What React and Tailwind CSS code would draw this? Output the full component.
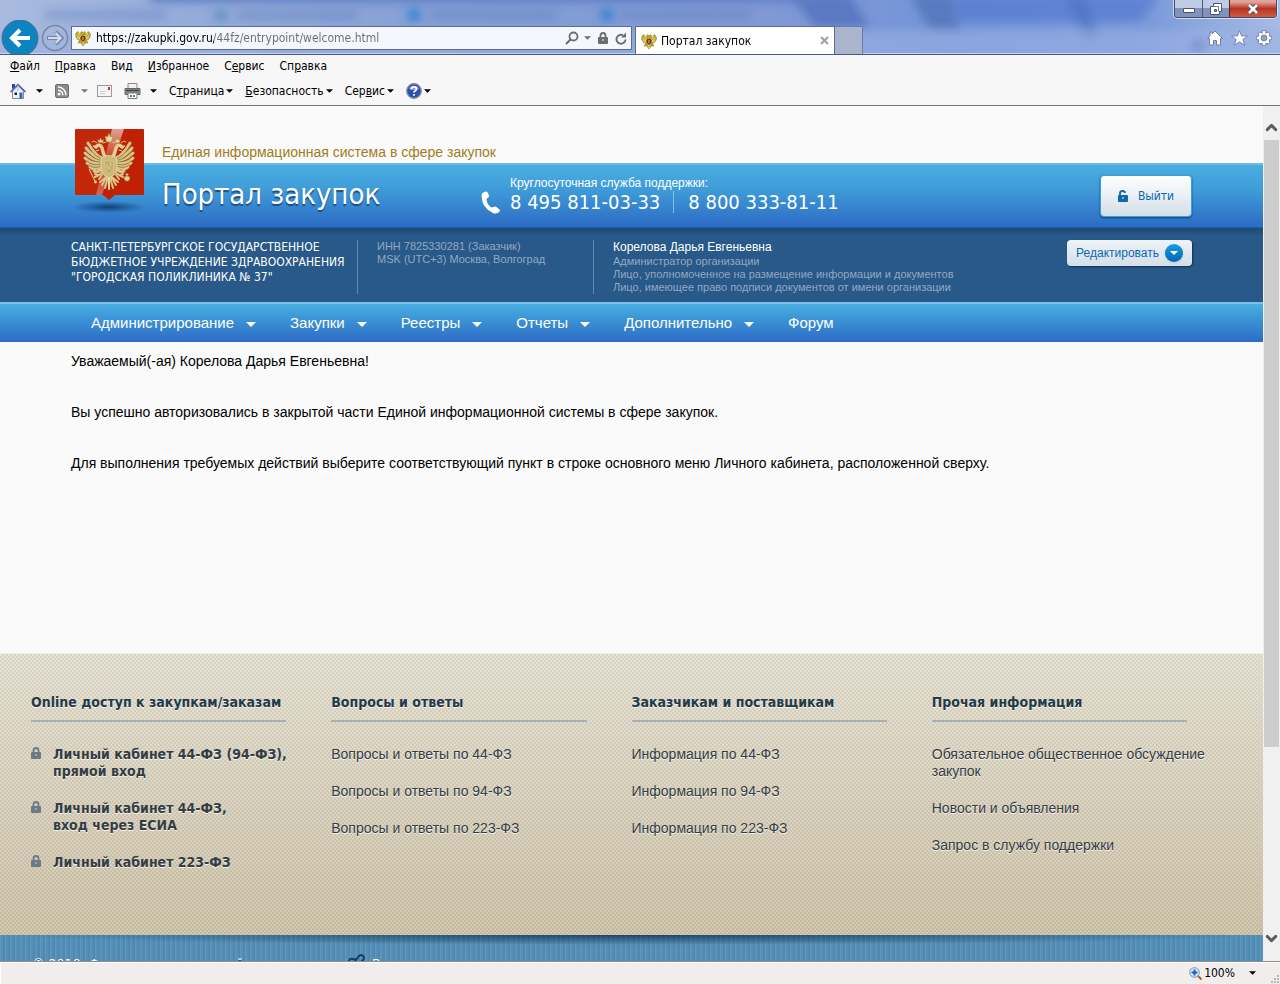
import { ChevronDown, ChevronUp } from 'lucide-react';

const navItems = [
    { label: 'Администрирование', menu: true },
    { label: 'Закупки', menu: true },
    { label: 'Реестры', menu: true },
    { label: 'Отчеты', menu: true },
    { label: 'Дополнительно', menu: true },
    { label: 'Форум', menu: false },
];

const footerColumns = [
    { title: 'Вопросы и ответы', links: ['Вопросы и ответы по 44-ФЗ', 'Вопросы и ответы по 94-ФЗ', 'Вопросы и ответы по 223-ФЗ'] },
    { title: 'Заказчикам и поставщикам', links: ['Информация по 44-ФЗ', 'Информация по 94-ФЗ', 'Информация по 223-ФЗ'] },
    { title: 'Прочая информация', links: ['Обязательное общественное обсуждение закупок', 'Новости и объявления', 'Запрос в службу поддержки'] },
];

const cabinetLinks = [
    ['Личный кабинет 44-ФЗ (94-ФЗ),', 'прямой вход'],
    ['Личный кабинет 44-ФЗ,', 'вход через ЕСИА'],
    ['Личный кабинет 223-ФЗ'],
];

function Caret({ className }) {
    return (
        <svg viewBox="0 0 10 5" className={className} fill="currentColor" aria-hidden="true">
            <path d="M0 0h10L5 5z" />
        </svg>
    );
}

// One half of the eagle, mirrored for the other side
function EagleHalf() {
    return (
        <g fill="none" strokeLinecap="round" strokeLinejoin="round">
            <path d="M34 36C28 34 24 28 20 21M33 37C27 35 22 31 18 26M33 39C26 39 21 35 17 31M33 41C27 42 21 40 17 36M33 43C28 45 22 44 19 41M34 44C29 47 25 48 22 45M35 45C32 49 29 51 26 49" stroke="#d6c68a" strokeWidth="3" />
            <path d="M33 36.500C27 34 23 29 20 24M32 38C26 37 22 33 18 29M32 40C26 40 21 37 18 34M33 42C27 44 22 42 19 39M33 44C29 46 25 46 21 43" stroke="#8d6a2c" strokeWidth="0.8" />
            <path d="M38 36C35 33 35 29 34 26C33 23 30 22 28 25" stroke="#dfd09a" strokeWidth="3.400" />
            <path d="M28 24L25 24L27 26M31 28L28 29" stroke="#e6d9a4" strokeWidth="1" />
            <path d="M30.500 20.500L29.500 17.500L31.500 18.500L32.500 16L34 18.500L35.500 17.500L35 20.500Z" fill="#e6d9a4" stroke="#a58440" strokeWidth="0.500" />
            <path d="M35 21L38 20M29 21L26 19L24 20" stroke="#d6c68a" strokeWidth="1" />
            <path d="M36 49L31 53L27 55M34 53L31 57M30 53L27 52" stroke="#d6c68a" strokeWidth="2" />
            <path d="M39 54L34 63M40 55L37 66M38 55L32 60" stroke="#d6c68a" strokeWidth="2" />
        </g>
    );
}

function Eagle() {
    return (
        <g>
            <EagleHalf />
            <g transform="translate(82 0) scale(-1 1)"><EagleHalf /></g>
            <path d="M41 54V67" stroke="#e6d9a4" strokeWidth="2" strokeLinecap="round" />
            <path d="M38 18L37 14L39.500 15L41 11L42.500 15L45 14L44 18L43 20H39Z" fill="#e6d9a4" stroke="#a58440" strokeWidth="0.500" />
            <path d="M33.500 36Q41 31 48.500 36L49 48Q47 54 41 56Q35 54 33 48Z" fill="#cdb97a" stroke="#e6d9a4" strokeWidth="0.800" />
            <path d="M36.500 39H45.500V47Q44.500 50 41 51Q37.500 50 36.500 47Z" fill="#c4ac68" stroke="#dccb92" strokeWidth="0.600" />
            <path d="M42 40L43 43L41 46L43 48M40 42L38 44L40 46L38.500 48" stroke="#e6d9a4" strokeWidth="0.800" fill="none" />
            <path d="M21 47L27 59" stroke="#e6d9a4" strokeWidth="1" />
            <circle cx="27.500" cy="60" r="1.400" fill="#e6d9a4" />
            <circle cx="59" cy="56.500" r="2.800" fill="#d6c68a" stroke="#8d6a2c" strokeWidth="0.500" />
            <path d="M59 51V54M57.500 52.500H60.500M56.500 56.500H61.500" stroke="#f0e6c0" strokeWidth="0.800" />
        </g>
    );
}

function Favicon() {
    return (
        <svg viewBox="0 0 16 16" className="size-4 shrink-0" aria-hidden="true">
            <path d="M1 3L3 1.500L4.500 4L6 4.500L5.500 2.500L7 1.500L8 3L9 1.500L10.500 2.500L10 4.500L11.500 4L13 1.500L15 3L15.500 6L14 9L11.500 10.500L13 13L10.500 13L9.500 14L8 16L6.500 14L5.500 13L3 13L4.500 10.500L2 9L0.500 6Z" fill="#b7a322" stroke="#8f7f2a" strokeWidth="0.500" />
            <path d="M1.500 5L5 8M3 3L6 7M2 7.500L5 9M14.500 5L11 8M13 3L10 7M14 7.500L11 9" stroke="#f2e68e" strokeWidth="0.900" />
            <path d="M6 6.500H10V9.500L8 11L6 9.500Z" fill="#b3141e" stroke="#4a2a12" strokeWidth="0.600" />
            <path d="M8 7V10M8 12V15" stroke="#f0e8cc" strokeWidth="0.800" />
        </svg>
    );
}

function Emblem() {
    return (
        <svg viewBox="0 0 84 90" className="absolute left-[-3px] top-[17px] h-[90px] w-[84px]" role="img" aria-label="Герб России">
            <defs>
                <radialGradient id="drop">
                    <stop offset="0" stopColor="#0d3566" stopOpacity="0.85" />
                    <stop offset="0.5" stopColor="#0d3566" stopOpacity="0.4" />
                    <stop offset="1" stopColor="#0d3566" stopOpacity="0" />
                </radialGradient>
                <linearGradient id="shine" x1="0" y1="1" x2="0" y2="0">
                    <stop offset="0" stopColor="#fff" stopOpacity="0.3" />
                    <stop offset="0.5" stopColor="#fff" stopOpacity="0.08" />
                    <stop offset="1" stopColor="#fff" stopOpacity="0.55" />
                </linearGradient>
            </defs>
            <ellipse cx="41" cy="84" rx="37" ry="6" fill="url(#drop)" />
            <path d="M8 6H75Q76 6 76 7V71Q76 72 75 72H47L41 77L35 72H8Q7 72 7 71V7Q7 6 8 6Z" fill="#c02003" />
            <path d="M56 6L34 72H8Q7 72 7 71V7Q7 6 8 6Z" fill="#fff" fillOpacity="0.03" />
            <path d="M44 6H56L34 72H28Z" fill="url(#shine)" />
            <g transform="translate(0 -1)"><Eagle /></g>
        </svg>
    );
}

function Lock({ open, className }) {
    return (
        <svg viewBox="0 0 10 12" className={className} aria-hidden="true">
            <path d={open ? 'M2 6V3Q2 1 4.500 1Q7 1 7 3' : 'M2.500 6V3.500Q2.500 1 5 1Q7.500 1 7.500 3.500V6'} fill="none" stroke="currentColor" strokeWidth="1.800" />
            <path d="M1 5H9Q10 5 10 6V11Q10 12 9 12H1Q0 12 0 11V6Q0 5 1 5ZM4 7.500V8.500H6V7.500Z" fill="currentColor" fillRule="evenodd" />
        </svg>
    );
}

function GlassBackdrop() {
    return (
        <svg className="absolute inset-0 size-full" viewBox="0 0 1280 54" preserveAspectRatio="none" aria-hidden="true">
            <defs>
                <linearGradient id="glass" x1="0" y1="0" x2="1" y2="0">
                    <stop offset="0" stopColor="#a9bbdf" />
                    <stop offset="0.12" stopColor="#98addb" />
                    <stop offset="0.35" stopColor="#849fd6" />
                    <stop offset="0.6" stopColor="#8099d6" />
                    <stop offset="0.75" stopColor="#7294d9" />
                    <stop offset="0.9" stopColor="#7c9bdb" />
                    <stop offset="1" stopColor="#a9bce3" />
                </linearGradient>
                <filter id="soft" x="-20%" y="-60%" width="140%" height="220%"><feGaussianBlur stdDeviation="5" /></filter>
                <filter id="softer" x="-20%" y="-60%" width="140%" height="220%"><feGaussianBlur stdDeviation="4" /></filter>
            </defs>
            <rect width="1280" height="54" fill="url(#glass)" />
            <g filter="url(#soft)">
                <rect x="150" y="-10" width="650" height="12" fill="#5d7fc4" />
                <path d="M790 -5H850L870 28H815Z" fill="#5272bd" opacity="0.8" />
                <path d="M910 -5H950L960 30H930Z" fill="#5173b8" opacity="0.8" />
                <path d="M950 -5H1160L1140 22H960Z" fill="#587dd0" opacity="0.8" />
                <path d="M1065 -5H1085L1100 40H1085Z" fill="#4d71be" opacity="0.6" />
                <rect x="-10" y="30" width="1320" height="30" fill="#9bb0e2" opacity="0.6" />
            </g>
            <g filter="url(#softer)" fill="#5a79b8" opacity="0.4">
                <rect x="45" y="11" width="120" height="8" />
                <rect x="236" y="11" width="120" height="8" />
                <rect x="430" y="11" width="125" height="8" />
                <rect x="620" y="11" width="130" height="8" />
                <circle cx="1198" cy="46" r="7" />
            </g>
            <g filter="url(#softer)">
                <circle cx="414" cy="15" r="7" fill="#3d84cf" />
                <circle cx="607" cy="15" r="7" fill="#3d84cf" />
                <rect x="214" y="9" width="14" height="12" fill="#6a94ca" />
            </g>
        </svg>
    );
}

function TitleBar() {
    return (
        <header className="relative h-[55px] shrink-0 overflow-hidden border-b border-[#46597f]">
            <GlassBackdrop />
            <div className="relative flex h-[54px] flex-col border-b border-[#c6d3f0]">
                <div className="flex h-5 shrink-0 justify-end pr-[3px]">
                    <div className="flex h-[18px] overflow-hidden rounded-b border border-t-0 border-[#3f4c6b] shadow-[0_0_0_1px_#ffffff99]">
                        <button aria-label="Свернуть" className="flex w-7 items-center justify-center border-r border-[#4c5978] bg-linear-to-b from-[#c0cce4] from-45% to-[#8193bd] to-50%">
                            <svg viewBox="0 0 12 5" className="mt-1 h-[5px] w-3"><path d="M0.500 0.500H11.500V4.500H0.500Z" fill="#fff" stroke="#4a5674" /></svg>
                        </button>
                        <button aria-label="Развернуть" className="flex w-[27px] items-center justify-center border-r border-[#5a2320] bg-linear-to-b from-[#c0cce4] from-45% to-[#8193bd] to-50%">
                            <svg viewBox="0 0 12 12" className="size-3"><path d="M3.500 0.500H11.500V8.500H9.500V11.500H0.500V3.500H3.500ZM4.500 6.500H6.500V8.500H4.500Z" fill="#fff" stroke="#4a5674" fillRule="evenodd" /><path d="M3.500 3.500H8.500V8.500" fill="none" stroke="#4a5674" strokeWidth="0.8" /></svg>
                        </button>
                        <button aria-label="Закрыть" className="flex w-[46px] items-center justify-center bg-linear-to-b from-[#e0a49c] from-10% via-[#b93324] via-50% to-[#cf5a40]">
                            <svg viewBox="0 0 12 10" className="h-[10px] w-3"><path d="M2 1L10 9M10 1L2 9" stroke="#5a4a5c" strokeWidth="4.600" /><path d="M2 1L10 9M10 1L2 9" stroke="#fff" strokeWidth="2.600" /></svg>
                        </button>
                    </div>
                </div>
                <div className="flex min-h-0 flex-1 items-start">
                    <button aria-label="Назад" className="size-10 shrink-0">
                        <svg viewBox="0 0 40 40" className="size-10">
                            <circle cx="20" cy="18" r="18" fill="#0c84c2" stroke="#55668a" />
                            <path d="M30 18H13M20 10L12 18L20 26" fill="none" stroke="#fff" strokeWidth="4" />
                        </svg>
                    </button>
                    <button aria-label="Вперед" className="mt-1 mr-[2px] ml-px size-7 shrink-0">
                        <svg viewBox="0 0 28 28" className="size-7">
                            <circle cx="14" cy="14" r="12.500" fill="#a6b7dc" fillOpacity="0.5" stroke="#76879f" strokeWidth="1.500" />
                            <path d="M6 14H20M14.500 8L20.500 14L14.500 20" fill="none" stroke="#7686a8" strokeWidth="4" />
                            <path d="M7 14H19M14.500 9L19.500 14L14.500 19" fill="none" stroke="#d4dcee" strokeWidth="2.200" />
                        </svg>
                    </button>
                    <div className="mt-[6px] flex h-6 w-[561px] items-center border border-[#5b6c92] bg-[#f4f7fd] pr-1 pl-[3px] text-[#6d6d6d]">
                        <Favicon />
                        <input
                            aria-label="Адрес"
                            defaultValue="https://zakupki.gov.ru/44fz/entrypoint/welcome.html"
                            className="ml-[5px] min-w-0 flex-1 bg-linear-to-r from-black from-[118px] to-[#6d6d6d] to-[118px] bg-clip-text text-xs text-transparent outline-none"
                        />
                        <button aria-label="Поиск">
                            <svg viewBox="0 0 14 14" className="size-[14px]"><circle cx="8.500" cy="5.500" r="4" fill="none" stroke="currentColor" strokeWidth="1.800" /><path d="M5.500 8.500L1 13" stroke="currentColor" strokeWidth="2.200" /></svg>
                        </button>
                        <Caret className="ml-[5px] h-1 w-[7px]" />
                        <Lock className="mx-[7px] h-3 w-[10px]" />
                        <button aria-label="Обновить">
                            <svg viewBox="0 0 12 13" className="h-[13px] w-3"><path d="M10.500 7.500A4.500 4.500 0 1 1 8 3.200" fill="none" stroke="currentColor" strokeWidth="1.900" /><path d="M6 5.500H11V0.500Z" fill="currentColor" /></svg>
                        </button>
                    </div>
                    <div className="mt-[6px] ml-[3px] flex h-7 w-[200px] items-center border border-b-0 border-[#5b6c92] bg-white px-[5px]">
                        <Favicon />
                        <span className="ml-1 text-xs">Портал закупок</span>
                        <button aria-label="Закрыть вкладку" className="ml-auto">
                            <svg viewBox="0 0 9 9" className="size-[9px]"><path d="M1 1L8 8M8 1L1 8" stroke="#a0a0a0" strokeWidth="2" /></svg>
                        </button>
                    </div>
                    <button aria-label="Новая вкладка" className="mt-[6px] h-7 w-7 border border-b-0 border-l-0 border-[#6a7ca6] bg-[#a9b4cd]" />
                    <div className="mt-[10px] mr-2 ml-auto flex gap-2">
                        <button aria-label="Домой">
                            <svg viewBox="0 0 16 16" className="size-4"><path d="M8 1L15.500 8.500H13.500V15H9.500V10.500H6.500V15H2.500V8.500H0.500L3 6V2H5V4Z" fill="#fff" stroke="#67779e" strokeWidth="0.9" /></svg>
                        </button>
                        <button aria-label="Избранное">
                            <svg viewBox="0 0 17 16" className="h-4 w-[17px]"><path d="M8.500 0.500L10.500 6H16.500L11.800 9.500L13.600 15.300L8.500 11.800L3.400 15.300L5.200 9.500L0.500 6H6.500Z" fill="#fff" stroke="#67779e" strokeWidth="0.8" /></svg>
                        </button>
                        <button aria-label="Сервис">
                            <svg viewBox="0 0 16 16" className="size-4">
                                <path d="M8 0.500V15.500M0.500 8H15.500M2.700 2.700L13.300 13.300M13.300 2.700L2.700 13.300" stroke="#67779e" strokeWidth="4" />
                                <circle cx="8" cy="8" r="4.800" fill="none" stroke="#67779e" strokeWidth="3.600" />
                                <path d="M8 1V4M8 12V15M1 8H4M12 8H15M3.100 3.100L5 5M11 11L12.900 12.900M12.900 3.100L11 5M5 11L3.100 12.900" stroke="#fff" strokeWidth="2.400" />
                                <circle cx="8" cy="8" r="4.400" fill="#8fa5d0" stroke="#fff" strokeWidth="2.400" />
                                <circle cx="8" cy="8" r="2.800" fill="none" stroke="#67779e" strokeWidth="0.8" />
                            </svg>
                        </button>
                    </div>
                </div>
            </div>
        </header>
    );
}

function Toolbars() {
    return (
        <div className="h-[51px] shrink-0 border-b border-[#767676] bg-[#f7f7f7] text-xs">
            <div className="flex h-[22px] items-center gap-[15px] px-[10px]">
                <button><u>Ф</u>айл</button>
                <button><u>П</u>равка</button>
                <button>Ви<u>д</u></button>
                <button><u>И</u>збранное</button>
                <button>С<u>е</u>рвис</button>
                <button>Сп<u>р</u>авка</button>
            </div>
            <div className="flex h-7 items-center px-[10px]">
                <button className="flex items-center gap-[10px]" aria-label="Домашняя страница">
                    <svg viewBox="0 0 16 16" className="size-4"><path d="M2 1H5V4L2 6Z" fill="#2b3fc0" /><path d="M2.500 8L8 2.500L13.500 8V15.500H2.500Z" fill="#eef2fa" stroke="#7b8ab0" /><path d="M0.500 9L8 1.500L15.500 9" fill="none" stroke="#4a5ca0" strokeWidth="1.500" /><path d="M8 2V8" stroke="#9db0dd" strokeWidth="1" /><path d="M9.500 9.500H12.500V15.500H9.500Z" fill="#3d5fb0" /><path d="M4.500 9.500H7V12H4.500Z" fill="#222" /></svg>
                    <Caret className="h-1 w-[7px]" />
                </button>
                <button className="ml-3 flex items-center gap-3" aria-label="Веб-каналы">
                    <svg viewBox="0 0 14 14" className="size-[14px]"><rect x="0.500" y="0.500" width="13" height="13" rx="1.500" fill="#8a8a8a" stroke="#6f6f6f" /><circle cx="4" cy="10.200" r="1.400" fill="#fff" /><path d="M3 6.200A4.800 4.800 0 0 1 7.800 11.200M3 3A8 8 0 0 1 11 11.200" fill="none" stroke="#fff" strokeWidth="1.500" /></svg>
                    <Caret className="h-1 w-[7px] text-[#777]" />
                </button>
                <button className="ml-[9px]" aria-label="Почта">
                    <svg viewBox="0 0 15 12" className="h-3 w-[15px]"><rect x="0.500" y="0.500" width="14" height="11" fill="#f4f4f4" stroke="#9a9a9a" /><rect x="11" y="2" width="2" height="3" fill="#e02a2a" /><path d="M3 6.500H9M3 8.500H8" stroke="#d2d2d2" /></svg>
                </button>
                <button className="ml-3 flex items-center gap-[9px]" aria-label="Печать">
                    <svg viewBox="0 0 17 16" className="h-4 w-[17px]"><path d="M4 0.500H13V6H4Z" fill="#f2f2f2" stroke="#8a8a8a" /><path d="M1 5.500H16V11.500H1Z" fill="#8b8b8b" stroke="#666" /><path d="M2 7.500H15" stroke="#444" strokeWidth="1.500" /><path d="M4 10H13V15.500H4Z" fill="#fff" stroke="#7a7a7a" /><path d="M6 12H8V14H6Z" fill="#2c7fd0" /><path d="M9 12H11V14H9Z" fill="#3aa655" /></svg>
                    <Caret className="h-1 w-[7px]" />
                </button>
                <button className="ml-3 flex items-center gap-[2px]"><span>С<u>т</u>раница</span><Caret className="h-1 w-[7px]" /></button>
                <button className="ml-3 flex items-center gap-[2px]"><span><u>Б</u>езопасность</span><Caret className="h-1 w-[7px]" /></button>
                <button className="ml-3 flex items-center gap-[2px]"><span>Сер<u>в</u>ис</span><Caret className="h-1 w-[7px]" /></button>
                <button className="ml-3 flex items-center gap-[2px]" aria-label="Справка">
                    <svg viewBox="0 0 16 16" className="size-4"><circle cx="8" cy="8" r="7.200" fill="#2a50b4" stroke="#7d8497" strokeWidth="1.400" /><path d="M3 6A5.500 5.500 0 0 1 13 6Q8 8 3 6Z" fill="#7f9be0" /><path d="M5.500 6.200Q5.500 3.800 8 3.800Q10.500 3.800 10.500 6Q10.500 7.200 9 8Q8 8.500 8 9.600M8 11V12.800" fill="none" stroke="#fff" strokeWidth="1.800" /></svg>
                    <Caret className="h-1 w-[7px]" />
                </button>
            </div>
        </div>
    );
}

function PortalHeader() {
    return (
        <div className="shrink-0">
            <div className="relative mx-[71px]">
                <Emblem />
                <p className="flex h-[57px] items-end pb-px pl-[91px] font-['Liberation_Sans',sans-serif] text-sm text-[#a07d1c]">Единая информационная система в сфере закупок</p>
            </div>
            <div className="h-[65px] border-t-2 border-b border-t-[#6cb9ec] border-b-[#0c62b4] bg-linear-to-b from-[#49aee2] via-[#3f9bd8] via-40% to-[#2d6bc4] px-[71px] text-white">
                <div className="flex h-full items-center">
                    <h1 className="w-[410px] pb-[2px] pl-[91px] text-[29px] whitespace-nowrap [text-shadow:0_2px_1px_#1d4c86]">Портал закупок</h1>
                    <svg viewBox="0 0 20 23" className="mt-3 h-[23px] w-5 shrink-0" aria-hidden="true"><path d="M5 0.500Q6.500 0.500 7 2L8 5Q8 6.500 6.500 7L5.500 8Q5.500 13 10.500 16.500L12.500 16Q14 15 15.500 16L18.500 18.500Q19.500 19.500 18.500 20.500Q16 23.500 12 22Q1 17 0.500 5Q0.500 1 5 0.500Z" fill="#fff" /></svg>
                    <div className="ml-[9px] pb-1">
                        <p className="font-['Liberation_Sans',sans-serif] text-xs leading-4">Круглосуточная служба поддержки:</p>
                        <p className="flex items-center text-xl leading-[22px] whitespace-nowrap">
                            <span className="mr-[14px] border-r border-[#7fc0ec] pr-[13px]">8 495 811-03-33</span>
                            <span>8 800 333-81-11</span>
                        </p>
                    </div>
                    <button className="ml-auto flex h-[42px] w-[92px] items-center justify-center gap-[10px] rounded border border-[#3aa0d8] bg-linear-to-b from-white to-[#d3dfe8] text-xs text-[#0b68ac] shadow-[0_1px_2px_#12407a]">
                        <Lock open className="h-3 w-[10px]" />
                        Выйти
                    </button>
                </div>
            </div>
            <div className="flex h-[74px] items-start bg-[#285988] bg-linear-to-b from-[#1f4871] to-[#285988] to-10% px-[71px] pt-3 font-['Liberation_Sans',sans-serif] text-[11px] leading-[13px] text-[#92a8c2]">
                <p className="h-[54px] w-[287px] border-r border-[#6487ad] font-['DejaVu_Sans_Condensed',sans-serif] text-xs leading-[15px] whitespace-nowrap text-white">
                    САНКТ-ПЕТЕРБУРГСКОЕ ГОСУДАРСТВЕННОЕ<br />БЮДЖЕТНОЕ УЧРЕЖДЕНИЕ ЗДРАВООХРАНЕНИЯ<br />"ГОРОДСКАЯ ПОЛИКЛИНИКА № 37"
                </p>
                <p className="h-[54px] w-[236px] border-r border-[#6487ad] pl-[19px]">
                    ИНН 7825330281 (Заказчик)<br />MSK (UTC+3) Москва, Волгоград
                </p>
                <div className="pl-[19px] whitespace-nowrap">
                    <p className="text-xs leading-[15px] text-white">Корелова Дарья Евгеньевна</p>
                    <p>Администратор организации<br />Лицо, уполномоченное на размещение информации и документов<br />Лицо, имеющее право подписи документов от имени организации</p>
                </div>
                <button className="ml-auto flex h-[26px] items-center gap-[6px] rounded bg-linear-to-b from-[#f0f2f8] to-[#d3dfe9] px-[9px] text-xs whitespace-nowrap text-[#0b6ab4] shadow-[1px_1px_2px_#12304e]">
                    Редактировать
                    <span className="flex size-[18px] items-center justify-center rounded-full bg-linear-to-b from-[#16a0e0] to-[#0663b6] text-white shadow-sm"><Caret className="h-1 w-2" /></span>
                </button>
            </div>
            <nav className="flex h-10 items-center gap-[34px] border-t-2 border-[#7dc0f0] bg-linear-to-b from-[#49aee2] to-[#2d6bc4] px-[91px] font-['Liberation_Sans',sans-serif] text-[15px] text-white">
                {navItems.map((item) => (
                    <a key={item.label} href="#" className="flex items-center gap-3">
                        {item.label}
                        {item.menu && <Caret className="mt-[2px] h-[5px] w-[10px]" />}
                    </a>
                ))}
            </nav>
        </div>
    );
}

function FooterTitle({ children }) {
    return <h2 className="mr-[45px] mb-6 border-b-2 border-[#a9afb0] pb-[9px] font-['DejaVu_Sans_Condensed',sans-serif] font-bold whitespace-nowrap text-[#24394a]">{children}</h2>;
}

function PortalFooter() {
    return (
        <footer className="flex flex-1 shrink-0 flex-col">
            <div className="bg-linear-to-b from-[#e3dfd1] to-[#cbc0a6] shadow-[0_-1px_1px_#eeeeea]">
                <div className="grid h-[281px] grid-cols-4 bg-[repeating-conic-gradient(#8c825f20_0_25%,#ffffff20_0_50%)] bg-size-[4px_4px] px-[31px] pt-10 font-['Liberation_Sans',sans-serif] text-sm leading-[17px] text-[#343c44] [text-shadow:0_1px_0_#f4f1e8]">
                    <section>
                        <FooterTitle>Online доступ к закупкам/заказам</FooterTitle>
                        <ul className="flex flex-col gap-5 font-['DejaVu_Sans_Condensed',sans-serif]">
                            {cabinetLinks.map((lines) => (
                                <li key={lines[0]} className="flex gap-3">
                                    <Lock className="mt-px h-3 w-[10px] shrink-0 text-[#6b7a86]" />
                                    <a href="#" className="font-bold whitespace-nowrap">
                                        {lines.map((line) => <span key={line} className="block">{line}</span>)}
                                    </a>
                                </li>
                            ))}
                        </ul>
                    </section>
                    {footerColumns.map((column) => (
                        <section key={column.title}>
                            <FooterTitle>{column.title}</FooterTitle>
                            <ul className="flex flex-col gap-5">
                                {column.links.map((link) => <li key={link}><a href="#" className="block">{link}</a></li>)}
                            </ul>
                        </section>
                    ))}
                </div>
            </div>
            <div className="flex-1 bg-[#5590b8] bg-[repeating-linear-gradient(90deg,#ffffff10_0_1px,transparent_1px_3px,#00305012_3px_5px)] text-sm text-white">
                <div className="flex h-[300px] items-start bg-[radial-gradient(ellipse_50%_10px_at_50%_0,#12324fcc,transparent)] px-8 pt-[19px] [text-shadow:0_1px_0_#1c4a70]">
                    <p className="w-[315px]">© 2018, Федеральное казначейство</p>
                    <svg viewBox="0 0 18 14" className="mr-[7px] h-[14px] w-[18px]" aria-hidden="true"><path d="M8 7L12 2Q14 0 16 2Q18 4 16 6L12 10M10 6L6 5Q3 4 2 7Q0 11 4 12" fill="none" stroke="#123f63" strokeWidth="2" /></svg>
                    <a href="#">Версия</a>
                </div>
            </div>
        </footer>
    );
}

function Scrollbar() {
    return (
        <div className="flex w-[17px] shrink-0 flex-col items-center bg-[#f0f0f0] text-[#5c5c5c]">
            <button aria-label="Вверх" className="flex h-[34px] shrink-0 items-center pt-2"><ChevronUp size={17} strokeWidth={4} /></button>
            <div className="h-[71%] w-[15px] bg-[#cdcdcd]" />
            <button aria-label="Вниз" className="mt-auto mb-[14px]"><ChevronDown size={17} strokeWidth={4} /></button>
        </div>
    );
}

function StatusBar() {
    return (
        <div className="flex h-[23px] shrink-0 items-center justify-end border-t border-[#8c8c8c] bg-[#f0edec] shadow-[inset_1px_1px_0_#fff] text-xs">
            <button className="flex items-center">
                <svg viewBox="0 0 13 13" className="size-[13px]" aria-hidden="true"><circle cx="5.500" cy="5.500" r="4.800" fill="#d8eafa" stroke="#7c93ad" /><path d="M5.500 2.500V8.500M2.500 5.500H8.500" stroke="#1c5fc4" strokeWidth="2" /><path d="M9 9L12.500 12.500" stroke="#a8612c" strokeWidth="2" /></svg>
                <span className="ml-[2px]">100%</span>
                <Caret className="mr-[10px] ml-[14px] h-1 w-[7px]" />
            </button>
            <svg viewBox="0 0 10 10" className="mt-3 ml-1 size-[10px] text-[#b8b8b8]" aria-hidden="true"><path d="M7 1H9V3H7ZM4 4H6V6H4ZM7 4H9V6H7ZM1 7H3V9H1ZM4 7H6V9H4ZM7 7H9V9H7Z" fill="currentColor" /></svg>
        </div>
    );
}

export default function App() {
    return (
        <div className="flex h-screen flex-col overflow-hidden bg-[#fafafa] font-['DejaVu_Sans_Condensed','Noto_Sans',sans-serif] text-black">
            <TitleBar />
            <Toolbars />
            <div className="flex min-h-0 flex-1">
                <div className="flex min-w-0 flex-1 flex-col overflow-hidden">
                    <PortalHeader />
                    <main className="min-h-[312px] shrink-0 px-[71px] pt-[11px] font-['Liberation_Sans',sans-serif] text-sm leading-[17px]">
                        <p>Уважаемый(-ая) Корелова Дарья Евгеньевна!</p>
                        <p className="mt-[34px]">Вы успешно авторизовались в закрытой части Единой информационной системы в сфере закупок.</p>
                        <p className="mt-[34px]">Для выполнения требуемых действий выберите соответствующий пункт в строке основного меню Личного кабинета, расположенной сверху.</p>
                    </main>
                    <PortalFooter />
                </div>
                <Scrollbar />
            </div>
            <StatusBar />
        </div>
    );
}
